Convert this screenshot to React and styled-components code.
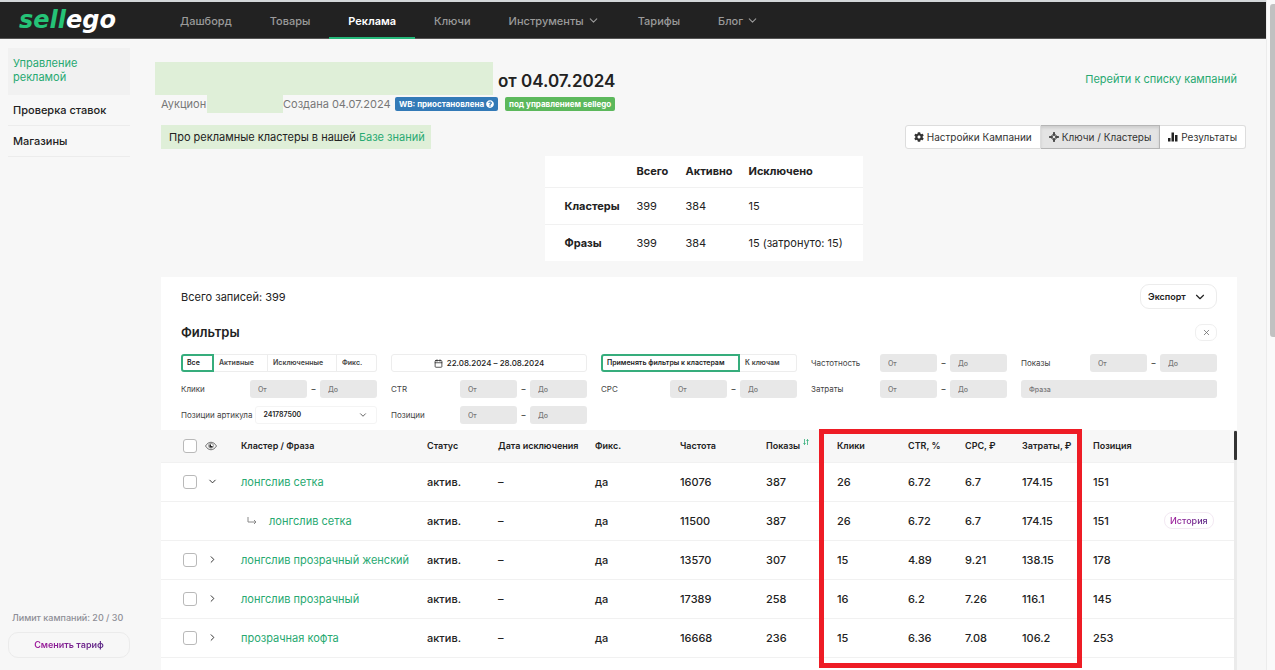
import React from "react";
import styled, { createGlobalStyle, css } from "styled-components";
import { ChevronDown, ChevronRight, X, Calendar } from "lucide-react";
import { FaCog, FaQuestionCircle } from "react-icons/fa";

const GlobalStyle = createGlobalStyle`
  *, *::before, *::after {
    box-sizing: border-box;
  }

  body {
    margin: 0;
    background-color: #f7f7f7;
    color: #222;
    font-family: Inter, "Noto Sans", sans-serif;
    font-size: 11px;
    line-height: 14px;
  }

  button, input, select {
    font: inherit;
    color: inherit;
    margin: 0;
  }

  button {
    cursor: pointer;
  }

  a {
    color: #27a971;
    text-decoration: none;
  }
`;

const Screen = styled.div`
  display: flex;
  height: 100vh;
  overflow: hidden;
`;

const Page = styled.div`
  flex: 1;
  min-width: 0;
  display: flex;
  flex-direction: column;
  border-top: 2px solid #d3d7d9;
`;

const PageScroll = styled.div`
  flex: none;
  width: 9px;
  padding: 4px 0 0 3px;
  background-color: #fafafa;
  border-left: 1px solid #ececec;
`;

const PageThumb = styled.div`
  height: 333px;
  border-radius: 3px 0 0 3px;
  background-color: #c1c1c1;
`;

const Header = styled.header`
  flex: none;
  display: flex;
  height: 37px;
  background-color: #222;
  border-bottom: 1px solid #555;
`;

const Logo = styled.a`
  width: 161px;
  padding-left: 19px;
  color: #fff;
  font-family: "DejaVu Sans", sans-serif;
  font-size: 24px;
  font-style: italic;
  font-weight: bold;
  line-height: 36px;

  span {
    color: #25c377;
  }
`;

const Menu = styled.nav`
  display: flex;
`;

const MenuLink = styled.a`
  display: flex;
  align-items: center;
  gap: 3px;
  height: 37px;
  padding: 2px 19px 0;
  border-bottom: 2px solid transparent;
  color: #9a9a9a;
  font-weight: 500;

  ${({ $active }) => $active && css`
    border-color: #25b87a;
    color: #fff;
    font-weight: 600;
  `}
`;

const Body = styled.div`
  flex: 1;
  min-height: 0;
  display: flex;
`;

const Sidebar = styled.aside`
  flex: none;
  display: flex;
  flex-direction: column;
  justify-content: space-between;
  width: 155px;
  padding: 9px 25px 12px 8px;
`;

const SideLink = styled.a`
  display: block;
  padding: 8px 5px;
  border-bottom: 1px solid #ececec;
  color: #222;
  font-weight: 500;

  ${({ $active }) => $active && css`
    padding-bottom: 10px;
    background-color: #f1f1f1;
    border-color: #f1f1f1;
    color: #27a971;
    font-weight: 400;
  `}
`;

const Limit = styled.p`
  margin: 0 0 7px;
  padding-left: 4px;
  color: #8e8e96;
  font-size: 9px;
  font-weight: 500;
  white-space: nowrap;
`;

const purple = css`
  span {
    background-image: linear-gradient(90deg, #a01a9c, #5b2a86);
    background-clip: text;
    color: transparent;
  }
`;

const PlanButton = styled.button`
  width: 100%;
  height: 26px;
  padding: 0;
  background: none;
  border: 1px solid #ebebeb;
  border-radius: 10px;
  font-size: 9px;
  font-weight: 600;
  ${purple}
`;

const Main = styled.main`
  flex: 1;
  min-width: 0;
  display: flex;
  flex-direction: column;
  padding: 23px 20px 0 0;
`;

const TitleRow = styled.div`
  display: flex;
  align-items: center;
  gap: 5px;
  height: 33px;
  padding-right: 9px;
`;

const Hidden = styled.div`
  width: ${({ $width }) => $width}px;
  height: 100%;
  background-color: #dfefd8;
`;

const Title = styled.h1`
  flex: 1;
  margin: 0;
  padding-top: 5px;
  font-size: 17px;
  font-weight: 600;
  line-height: 20px;
`;

const MetaRow = styled.div`
  display: flex;
  align-items: center;
  height: 18px;
  padding-left: 6px;
  color: #777;
`;

const MetaText = styled.span`
  width: ${({ $width }) => $width}px;
  white-space: nowrap;
`;

const Badge = styled.span`
  display: flex;
  align-items: center;
  gap: 2px;
  height: 14px;
  margin-right: 7px;
  padding: 0 4px;
  border-radius: 2px;
  background-color: ${({ $color }) => $color};
  color: #fff;
  font-size: 8px;
  font-weight: 700;
  white-space: nowrap;
`;

const ToolRow = styled.div`
  display: flex;
  justify-content: space-between;
  margin: 12px 0 7px 6px;
`;

const Notice = styled.p`
  margin: 0;
  padding: 5px 6px 5px 8px;
  background-color: #dfefd8;
`;

const ButtonGroup = styled.div`
  display: flex;
`;

const ViewButton = styled.button`
  display: flex;
  align-items: center;
  gap: 3px;
  height: 24px;
  padding: 0 8px;
  background-color: #fff;
  border: 1px solid #ddd;
  border-left-width: 0;
  color: #333;
  font-size: 10px;

  &:first-child {
    border-left-width: 1px;
    border-radius: 3px 0 0 3px;
  }

  &:last-child {
    border-radius: 0 3px 3px 0;
  }

  ${({ $active }) => $active && css`
    background-color: #e4e4e4;
    border-color: #b5b5b5;
    box-shadow: inset 0 2px 3px rgba(0, 0, 0, 0.1);
  `}
`;

const Summary = styled.table`
  align-self: center;
  flex: none;
  width: 318px;
  margin-left: 6px;
  border-collapse: collapse;
  table-layout: fixed;
  background-color: #fff;

  th, td {
    height: 37px;
    padding: 0;
    text-align: left;
    white-space: nowrap;
  }

  th {
    font-weight: 700;
  }

  thead th {
    height: 31px;
  }

  tr + tr, tbody tr {
    border-top: 1px solid #f1f1f1;
  }

  tbody th {
    padding-left: 20px;
  }
`;

const Card = styled.section`
  flex: 1;
  min-height: 0;
  display: flex;
  flex-direction: column;
  margin: 16px 9px 0 6px;
  background-color: #fff;
`;

const CardTop = styled.div`
  flex: none;
  display: flex;
  justify-content: space-between;
  align-items: center;
  padding: 7px 20px 0;
`;

const ExportButton = styled.button`
  display: flex;
  align-items: center;
  justify-content: space-between;
  width: 77px;
  height: 25px;
  padding: 0 9px 0 7px;
  background-color: #fff;
  border: 1px solid #ececec;
  border-radius: 9px;
  font-size: 9px;
  font-weight: 600;
`;

const FilterTitle = styled.h2`
  margin: 0;
  font-size: 13px;
  font-weight: 600;
  line-height: 18px;
`;

const CloseButton = styled.button`
  display: grid;
  place-items: center;
  width: 22px;
  height: 17px;
  padding: 0;
  background-color: #fff;
  border: 1px solid #efefef;
  border-radius: 7px;
  color: #666;
`;

const CardHead = styled(CardTop)`
  padding-top: 14px;
`;

const Filters = styled.form`
  flex: none;
  display: grid;
  grid-template-columns: repeat(5, 1fr);
  gap: 8px 14px;
  padding: 13px 20px 6px;
  font-size: 8px;
  line-height: 12px;
`;

const Segments = styled.div`
  display: flex;
  height: 18px;
`;

const Segment = styled.button`
  flex: ${({ $size }) => `${$size} 1 ${$size}px`};
  padding: 0 0 0 5px;
  background-color: #fff;
  border: 1px solid #ededed;
  border-left-width: 0;
  color: #444;
  font-size: 7px;
  font-weight: 600;
  text-align: left;
  white-space: nowrap;

  &:last-child {
    border-radius: 0 3px 3px 0;
  }

  ${({ $active }) => $active && css`
    padding-left: 4px;
    border: 2px solid #36ad7c;
    border-radius: 3px 0 0 3px;
    color: #222;
  `}
`;

const DateButton = styled.button`
  display: flex;
  align-items: center;
  justify-content: center;
  gap: 4px;
  height: 18px;
  padding: 0;
  background-color: #fff;
  border: 1px solid #ededed;
  border-radius: 3px;
  font-size: 8px;
  font-weight: 500;
`;

const RangeRow = styled.div`
  display: grid;
  grid-template-columns: 1fr 57px 13px 57px;
  align-items: center;
  height: 18px;
  color: #444;
  text-align: left;

  span {
    font-weight: 600;
    text-align: center;
  }
`;

const Input = styled.input`
  width: 100%;
  min-width: 0;
  height: 18px;
  padding: 0 8px;
  background-color: #e8e8e8;
  border: 0;
  border-radius: 3px;
  font-size: 7px;
  font-weight: 500;

  &::placeholder {
    color: #777;
    opacity: 1;
  }
`;

const SelectRow = styled.div`
  display: flex;
  align-items: center;
  gap: 3px;
  height: 18px;
  color: #444;
  white-space: nowrap;
`;

const SelectBox = styled.div`
  flex: 1;
  position: relative;

  select {
    appearance: none;
    width: 100%;
    height: 18px;
    padding: 0 7px;
    background-color: #fff;
    border: 1px solid #f4f4f4;
    border-radius: 3px;
    color: #222;
    font-size: 7px;
    font-weight: 600;
  }

  svg {
    position: absolute;
    top: 4px;
    right: 9px;
    pointer-events: none;
  }
`;

const TableArea = styled.div`
  flex: 1;
  min-height: 0;
  position: relative;
  display: flex;
`;

const Table = styled.table`
  flex: 1;
  align-self: flex-start;
  border-collapse: collapse;
  table-layout: fixed;

  th, td {
    height: 39px;
    padding: 0;
    border-bottom: 1px solid #f1f1f1;
    font-weight: 500;
    text-align: left;
    white-space: nowrap;
  }

  th {
    height: 32px;
    background-color: #f7f7f7;
    font-size: 9px;
    font-weight: 600;
  }

  td a {
    font-weight: 400;
  }

  sup {
    margin-left: 3px;
    line-height: 0;
  }
`;

const Tools = styled.div`
  display: flex;
  align-items: center;
  gap: 8px;
  padding-left: 22px;
`;

const Check = styled.input.attrs({ type: "checkbox" })`
  appearance: none;
  width: 14px;
  height: 14px;
  background-color: #fff;
  border: 1px solid #b9b9b9;
  border-radius: 3px;
`;

const IconButton = styled.button`
  display: grid;
  place-items: center;
  width: 14px;
  height: 14px;
  padding: 0;
  background: none;
  border: 0;
`;

const SubPhrase = styled.div`
  display: flex;
  align-items: center;
  gap: 12px;
  padding-left: 6px;
`;

const HistoryButton = styled.button`
  height: 17px;
  padding: 0 5px;
  background-color: #fff;
  border: 1px solid #f3e9f3;
  border-radius: 8px;
  font-size: 9px;
  font-weight: 500;
  line-height: 14px;
  ${purple}
`;

const TableScroll = styled.div`
  flex: none;
  width: 3px;
  padding-top: 1px;
  background-color: #ebebeb;
`;

const TableThumb = styled.div`
  height: 29px;
  border-radius: 1px;
  background-color: #333;
`;

// frame over the Клики - Затраты columns
const Highlight = styled.div`
  position: absolute;
  top: -1px;
  left: 658px;
  width: 263px;
  height: 239px;
  border: 5px solid #ee1c25;
  pointer-events: none;
`;

const TargetIcon = () => (
  <svg width="10" height="10" viewBox="0 0 20 20" fill="none" stroke="#333">
    <path d="M10 3 17 10 10 17 3 10Z" strokeWidth="2" />
    <path d="M10 0V8M10 12V20M0 10H8M12 10H20" strokeWidth="3" />
  </svg>
);

const StatsIcon = () => (
  <svg width="10" height="10" viewBox="0 0 20 20" fill="#222">
    <rect x="0" y="12" width="5" height="7" />
    <rect x="7" y="1" width="5" height="18" />
    <rect x="14" y="6" width="5" height="13" />
  </svg>
);

const EyeIcon = () => (
  <svg width="12" height="10" viewBox="0 0 24 20" fill="none" stroke="#444" strokeWidth="1.500">
    <path d="M1 10C4 5 8 2.500 12 2.500S20 5 23 10C20 15 16 17.500 12 17.500S4 15 1 10Z" />
    <circle cx="12" cy="9.500" r="5" strokeWidth="1" />
    <path d="M12 6.500A3.500 3.500 0 1 0 15.500 10H12Z" fill="#222" stroke="none" />
  </svg>
);

const SubIcon = () => (
  <svg width="10" height="8" viewBox="0 0 20 16" fill="none" stroke="#888" strokeWidth="2">
    <path d="M2 0V10H18M14 6 18 10 14 14" />
  </svg>
);

const SortIcon = () => (
  <svg width="6" height="6" viewBox="0 0 12 12" fill="none" stroke="#27a971" strokeWidth="1.500">
    <path d="M3 0V11M1 8 3 11 5 8M9 12V1M7 4 9 1 11 4" />
  </svg>
);

const menu = [
  { title: "Дашборд" },
  { title: "Товары" },
  { title: "Реклама", active: true },
  { title: "Ключи" },
  { title: "Инструменты", more: true },
  { title: "Тарифы" },
  { title: "Блог", more: true },
];

const columns = [80, 186, 71, 97, 85, 86, 71, 71, 57, 57, 71, 71];

const rows = [
  { name: "лонгслив сетка", open: true, cells: ["16076", "387", "26", "6.72", "6.7", "174.15", "151"] },
  { name: "лонгслив сетка", sub: true, cells: ["11500", "387", "26", "6.72", "6.7", "174.15", "151"] },
  { name: "лонгслив прозрачный женский", cells: ["13570", "307", "15", "4.89", "9.21", "138.15", "178"] },
  { name: "лонгслив прозрачный", cells: ["17389", "258", "16", "6.2", "7.26", "116.1", "145"] },
  { name: "прозрачная кофта", cells: ["16668", "236", "15", "6.36", "7.08", "106.2", "253"] },
];

const Range = ({ label, id }) => (
  <RangeRow>
    <label htmlFor={id}>{label}</label>
    <Input id={id} placeholder="От" />
    <span>–</span>
    <Input aria-label={`${label} до`} placeholder="До" />
  </RangeRow>
);

const Row = ({ row }) => (
  <tr>
    <td>
      {!row.sub && (
        <Tools>
          <Check aria-label={row.name} />
          <IconButton type="button" aria-label="Раскрыть">
            {row.open ? <ChevronDown size={11} /> : <ChevronRight size={11} />}
          </IconButton>
        </Tools>
      )}
    </td>
    <td>
      {row.sub ? (
        <SubPhrase>
          <SubIcon />
          <a href="#phrase">{row.name}</a>
        </SubPhrase>
      ) : (
        <a href="#phrase">{row.name}</a>
      )}
    </td>
    <td>актив.</td>
    <td>–</td>
    <td>да</td>
    {row.cells.map((cell, i) => <td key={i}>{cell}</td>)}
    <td>{row.sub && <HistoryButton type="button"><span>История</span></HistoryButton>}</td>
  </tr>
);

const App = () => (
  <>
    <GlobalStyle />
    <Screen>
      <Page>
        <Header>
          <Logo href="#home"><span>sell</span>ego</Logo>
          <Menu>
            {menu.map(({ title, active, more }) => (
              <MenuLink key={title} href="#menu" $active={active}>
                {title}
                {more && <ChevronDown size={13} />}
              </MenuLink>
            ))}
          </Menu>
        </Header>
        <Body>
          <Sidebar>
            <nav>
              <SideLink href="#ads" $active>Управление рекламой</SideLink>
              <SideLink href="#bids">Проверка ставок</SideLink>
              <SideLink href="#shops">Магазины</SideLink>
            </nav>
            <div>
              <Limit>Лимит кампаний: 20 / 30</Limit>
              <PlanButton type="button"><span>Сменить тариф</span></PlanButton>
            </div>
          </Sidebar>
          <Main>
            <TitleRow>
              <Hidden $width={338} />
              <Title>от 04.07.2024</Title>
              <a href="#campaigns">Перейти к списку кампаний</a>
            </TitleRow>
            <MetaRow>
              <MetaText $width={46}>Аукцион</MetaText>
              <Hidden $width={76} />
              <MetaText $width={112}>Создана 04.07.2024</MetaText>
              <Badge $color="#337ab7">WB: приостановлена <FaQuestionCircle size={8} /></Badge>
              <Badge $color="#5cb85c">под управлением sellego</Badge>
            </MetaRow>
            <ToolRow>
              <Notice>Про рекламные кластеры в нашей <a href="#wiki">Базе знаний</a></Notice>
              <ButtonGroup>
                <ViewButton type="button"><FaCog size={10} />Настройки Кампании</ViewButton>
                <ViewButton type="button" $active><TargetIcon />Ключи / Кластеры</ViewButton>
                <ViewButton type="button"><StatsIcon />Результаты</ViewButton>
              </ButtonGroup>
            </ToolRow>
            <Summary>
              <colgroup>
                <col width="92" />
                <col width="49" />
                <col width="63" />
                <col />
              </colgroup>
              <thead>
                <tr><th /><th>Всего</th><th>Активно</th><th>Исключено</th></tr>
              </thead>
              <tbody>
                <tr><th>Кластеры</th><td>399</td><td>384</td><td>15</td></tr>
                <tr><th>Фразы</th><td>399</td><td>384</td><td>15 (затронуто: 15)</td></tr>
              </tbody>
            </Summary>
            <Card>
              <CardTop>
                <span>Всего записей: 399</span>
                <ExportButton type="button">Экспорт <ChevronDown size={14} /></ExportButton>
              </CardTop>
              <CardHead>
                <FilterTitle>Фильтры</FilterTitle>
                <CloseButton type="button" aria-label="Закрыть"><X size={9} /></CloseButton>
              </CardHead>
              <Filters>
                <Segments>
                  <Segment type="button" $size={33} $active>Все</Segment>
                  <Segment type="button" $size={54}>Активные</Segment>
                  <Segment type="button" $size={69}>Исключенные</Segment>
                  <Segment type="button" $size={40}>Фикс.</Segment>
                </Segments>
                <DateButton type="button"><Calendar size={9} />22.08.2024 – 28.08.2024</DateButton>
                <Segments>
                  <Segment type="button" $size={139} $active>Применять фильтры к кластерам</Segment>
                  <Segment type="button" $size={57}>К ключам</Segment>
                </Segments>
                <Range id="freq" label="Частотность" />
                <Range id="shows" label="Показы" />
                <Range id="clicks" label="Клики" />
                <Range id="ctr" label="CTR" />
                <Range id="cpc" label="CPC" />
                <Range id="cost" label="Затраты" />
                <Input aria-label="Фраза" placeholder="Фраза" />
                <SelectRow>
                  <label htmlFor="article">Позиции артикула</label>
                  <SelectBox>
                    <select id="article"><option>241787500</option></select>
                    <ChevronDown size={10} />
                  </SelectBox>
                </SelectRow>
                <Range id="position" label="Позиции" />
              </Filters>
              <TableArea>
                <Table>
                  <colgroup>
                    {columns.map((width, i) => <col key={i} width={width} />)}
                    <col />
                  </colgroup>
                  <thead>
                    <tr>
                      <th>
                        <Tools>
                          <Check aria-label="Выбрать все" />
                          <EyeIcon />
                        </Tools>
                      </th>
                      <th>Кластер / Фраза</th>
                      <th>Статус</th>
                      <th>Дата исключения</th>
                      <th>Фикс.</th>
                      <th>Частота</th>
                      <th>Показы<sup><SortIcon /></sup></th>
                      <th>Клики</th>
                      <th>CTR, %</th>
                      <th>CPC, ₽</th>
                      <th>Затраты, ₽</th>
                      <th>Позиция</th>
                      <th />
                    </tr>
                  </thead>
                  <tbody>
                    {rows.map((row, i) => <Row key={i} row={row} />)}
                  </tbody>
                </Table>
                <TableScroll><TableThumb /></TableScroll>
                <Highlight />
              </TableArea>
            </Card>
          </Main>
        </Body>
      </Page>
      <PageScroll><PageThumb /></PageScroll>
    </Screen>
  </>
);

export default App;
